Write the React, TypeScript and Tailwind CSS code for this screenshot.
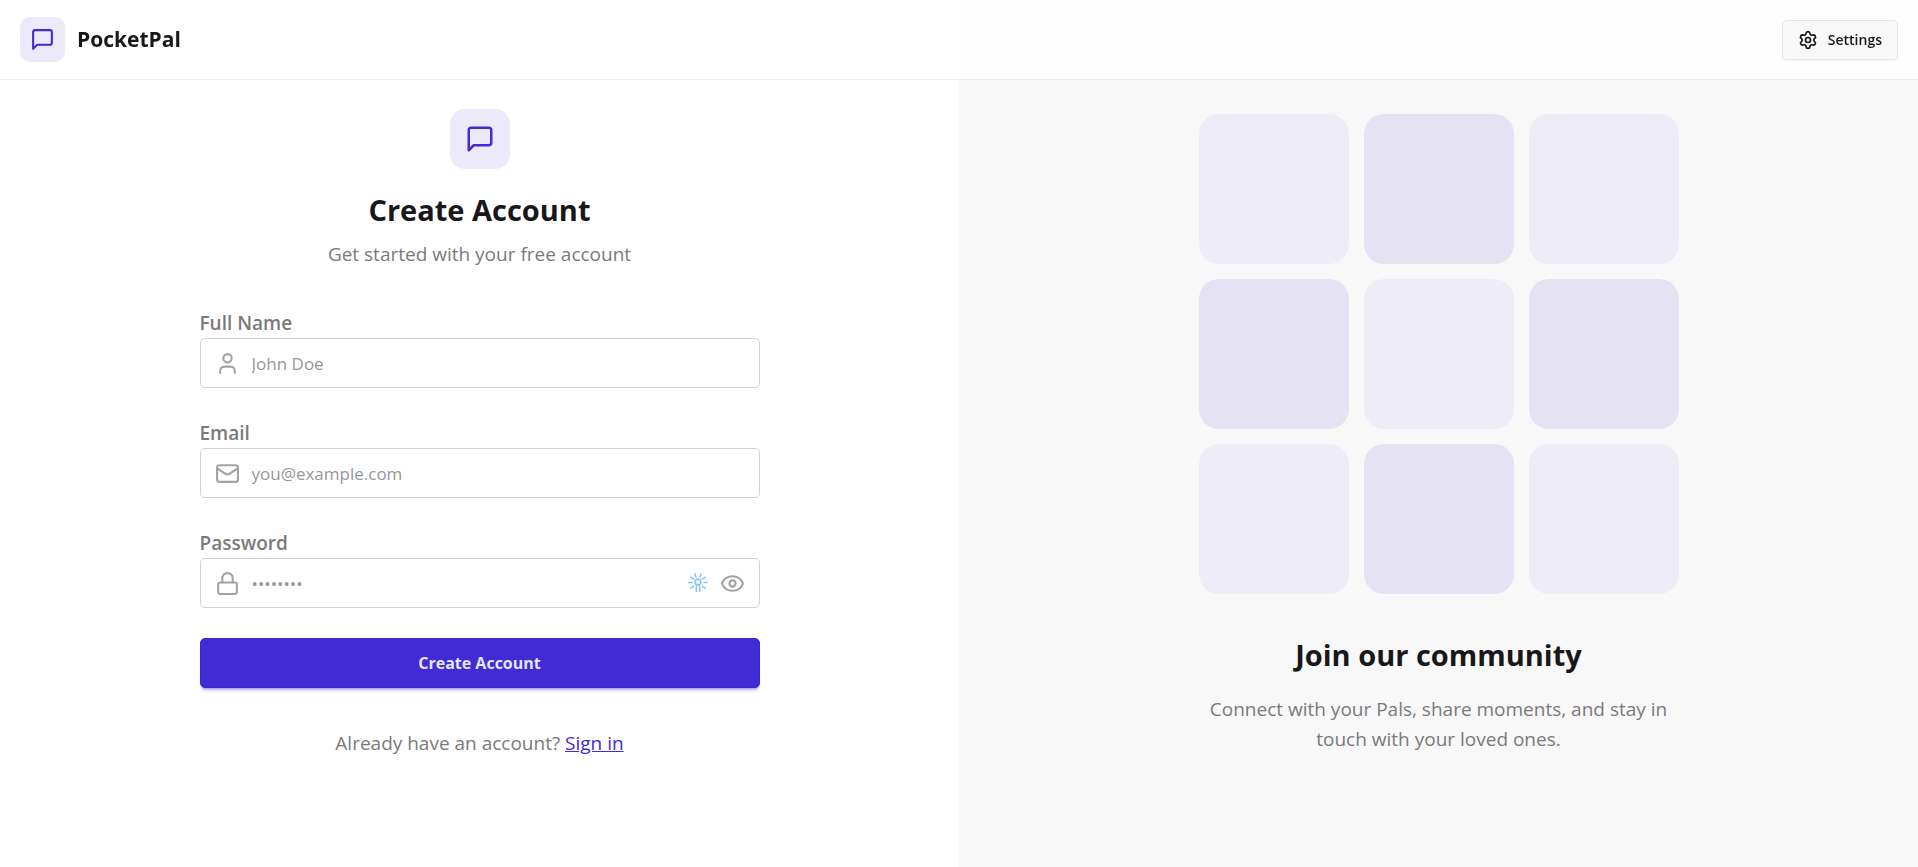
import { useState } from "react";
import type { ReactNode } from "react";
import { Eye, EyeOff, Lock, Mail, Settings, User } from "lucide-react";

function ChatIcon({ className }: { className: string }) {
  return (
    <svg
      viewBox="0 0 24 24"
      className={className}
      fill="none"
      stroke="currentColor"
      strokeWidth="2"
      strokeLinecap="round"
      strokeLinejoin="round"
      aria-hidden="true"
    >
      <path d="M21 15a2 2 0 0 1-2 2H7l-4 4V5a2 2 0 0 1 2-2h14a2 2 0 0 1 2 2z" />
    </svg>
  );
}

function Header() {
  return (
    <header className="sticky top-0 z-10 flex h-20 items-center justify-between border-b border-[#ebebeb] bg-white/80 px-5 backdrop-blur-lg">
      <a href="#" className="flex items-center gap-3">
        <span className="flex size-[45px] items-center justify-center rounded-[10px] bg-[#ece9fb]">
          <ChatIcon className="size-[25px] text-[#422ad5]" />
        </span>
        <h1 className="text-[21px] font-bold">PocketPal</h1>
      </a>
      <button
        type="button"
        className="flex h-10 items-center gap-2.5 rounded-[5px] border border-[#e6e6e6] bg-[#f8f8f8] px-[15px] text-sm font-semibold shadow-xs"
      >
        <Settings className="size-5" />
        Settings
      </button>
    </header>
  );
}

type FieldProps = {
  id: string;
  label: string;
  type: string;
  placeholder: string;
  icon: ReactNode;
  children?: ReactNode;
};

function Field({ id, label, type, placeholder, icon, children }: FieldProps) {
  return (
    <div>
      <label htmlFor={id} className="block text-[19px] leading-[30px] font-semibold text-[#7a7a7b]">
        {label}
      </label>
      <div className="flex h-[50px] items-center gap-3 rounded-[5px] border border-[#d1d1d1] bg-white px-[14px] text-[#a3a3a4]">
        {icon}
        <input
          id={id}
          type={type}
          placeholder={placeholder}
          className="h-full min-w-0 flex-1 bg-transparent text-[17px] text-[#18181b] outline-none placeholder:text-[#979798]"
        />
        {children}
      </div>
    </div>
  );
}

function KeyBurst() {
  return (
    <svg viewBox="0 0 20 20" className="size-5" fill="none" stroke="#8ec5ea" strokeWidth="1.6" aria-hidden="true">
      <circle cx="10" cy="9" r="2.9" />
      <path d="M8.4 11.5V19M11.6 11.5V19M0 9.5h4.5M15.5 9.5H20M2.5 4l3.5 2.3M17.5 4L14 6.3M6.8 0.5l1.2 4M13.2 0.5l-1.2 4M2.5 15.5L6 12.8M17.5 15.5L14 12.8" />
    </svg>
  );
}

function SignUp() {
  const [visible, setVisible] = useState(false);
  const iconClass = "size-[25px] shrink-0";
  return (
    <section className="flex justify-center px-6 py-[109px]">
      <div className="w-full max-w-[560px]">
        <div className="flex flex-col items-center text-center">
          <span className="flex size-[60px] items-center justify-center rounded-[15px] bg-[#ece9fb]">
            <ChatIcon className="size-[30px] text-[#422ad5]" />
          </span>
          <h2 className="mt-5 text-[29px] leading-[42px] font-bold">Create Account</h2>
          <p className="mt-2 text-[19px] leading-[30px] text-[#7a7a7b]">Get started with your free account</p>
        </div>
        <form className="mt-[39px] flex flex-col gap-[30px]" onSubmit={(e) => e.preventDefault()}>
          <Field id="name" label="Full Name" type="text" placeholder="John Doe" icon={<User className={iconClass} />} />
          <Field id="email" label="Email" type="email" placeholder="you@example.com" icon={<Mail className={iconClass} />} />
          <Field
            id="password"
            label="Password"
            type={visible ? "text" : "password"}
            placeholder="••••••••"
            icon={<Lock className={iconClass} />}
          >
            <KeyBurst />
            <button type="button" aria-label="Toggle password visibility" onClick={() => setVisible(!visible)}>
              {visible ? <EyeOff className={iconClass} /> : <Eye className={iconClass} />}
            </button>
          </Field>
          <button
            type="submit"
            className="h-[50px] rounded-[5px] border border-[#3e27c8] bg-[#422ad5] text-base font-bold text-[#e0e7ff] shadow-[0_3px_3px_-2px_#422ad54d,0_4px_3px_-2px_#422ad54d]"
          >
            Create Account
          </button>
        </form>
        <p className="mt-10 text-center text-[19px] leading-[30px] text-[#7a7a7b]">
          Already have an account?{" "}
          <a href="#" className="text-[#422ad5] underline">
            Sign in
          </a>
        </p>
      </div>
    </section>
  );
}

function Community() {
  return (
    <section className="flex justify-center bg-[#f8f8f8] px-6 pt-[114px] pb-[92px]">
      <div className="w-full max-w-[480px] text-center">
        <div className="grid grid-cols-3 gap-[15px]">
          {Array.from({ length: 9 }, (_, i) => (
            <div
              key={i}
              className={`aspect-square rounded-[20px] ${i % 2 === 0 ? "bg-[#eeecf7]" : "bg-[#e5e2f4]"}`}
            />
          ))}
        </div>
        <h2 className="mt-10 text-[29px] leading-[42px] font-bold">Join our community</h2>
        <p className="mt-[18px] text-[19px] leading-[30px] text-[#7a7a7b]">
          Connect with your Pals, share moments, and stay in touch with your loved ones.
        </p>
      </div>
    </section>
  );
}

export default function App() {
  return (
    <div className="min-h-screen bg-white font-['Open_Sans','Noto_Sans',sans-serif] text-[#18181b]">
      <Header />
      <main className="-mt-20 grid min-h-screen lg:grid-cols-2">
        <SignUp />
        <Community />
      </main>
    </div>
  );
}
